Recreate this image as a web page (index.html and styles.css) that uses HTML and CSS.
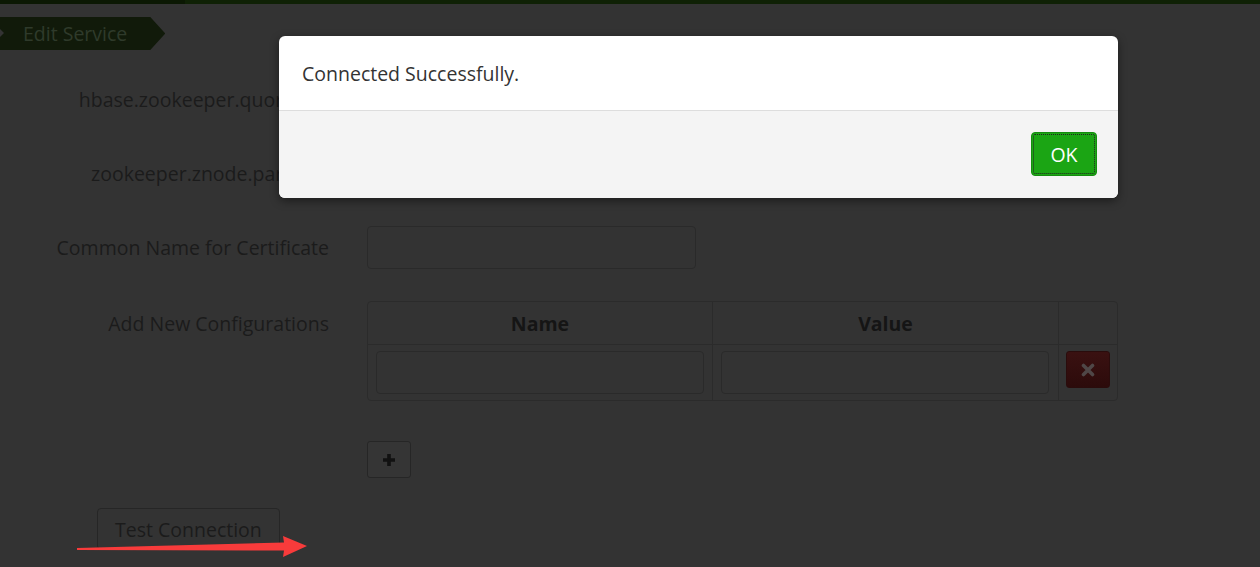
FILE: index.html
```html
<!DOCTYPE html>
<html lang="en">
<head>
<meta charset="utf-8">
<title>Edit Service</title>
<link rel="stylesheet" href="styles.css">
</head>
<body>
<div class="topbar"><div class="topbar-left"></div></div>
<nav class="crumbs">
  <span class="crumb-prev"></span>
  <span class="crumb">Edit Service</span>
</nav>
<form class="form">
  <label class="label">hbase.zookeeper.quorum <span class="req">*</span></label>
  <div class="control"><input class="input" type="text"></div>
  <label class="label">zookeeper.znode.parent <span class="req">*</span></label>
  <div class="control"><input class="input" type="text"></div>
  <label class="label">Common Name for Certificate</label>
  <div class="control"><input class="input" type="text"></div>
  <label class="label label-table">Add New Configurations</label>
  <div class="control">
    <table class="cfg">
      <colgroup><col class="c-name"><col class="c-value"><col class="c-del"></colgroup>
      <thead><tr><th>Name</th><th>Value</th><th class="th-del"></th></tr></thead>
      <tbody><tr>
        <td><input class="input cell-input" type="text"></td>
        <td><input class="input cell-input" type="text"></td>
        <td><button type="button" class="btn-del" aria-label="Remove"><svg width="14" height="14" viewBox="0 0 14 14"><path d="M2.5 2.5 L11.5 11.5 M11.5 2.5 L2.5 11.5" stroke="#4f4747" stroke-width="3.6" stroke-linecap="round"/></svg></button></td>
      </tr></tbody>
    </table>
    <button type="button" class="btn-add" aria-label="Add"><svg width="14" height="14" viewBox="0 0 14 14"><path d="M7 1 V13 M1 7 H13" stroke="#111" stroke-width="3.6"/></svg></button>
  </div>
  <div class="actions"><button type="button" class="btn-test">Test Connection</button></div>
</form>

<div class="modal">
  <div class="modal-body">Connected Successfully.</div>
  <div class="modal-footer"><button type="button" class="btn-ok">OK</button></div>
</div>

<svg class="arrow" width="240" height="30" viewBox="0 0 240 30">
  <polygon points="0,13 207,7.5 206,1 230,11 206,22 207,15.5 0,15" fill="#f83b3b"/>
</svg>
</body>
</html>
```

FILE: styles.css
```css
html, body {
  margin: 0;
  padding: 0;
  background: #333333;
  overflow: hidden;
}
body {
  font-family: "Open Sans", "Liberation Sans", sans-serif;
  font-size: 19.5px;
  color: #1b1b1b;
  position: relative;
  min-height: 567px;
}
.topbar {
  height: 4px;
  background: #0f2105;
  display: flex;
}
.topbar-left {
  width: 185px;
  background: #0b1803;
}
.crumbs {
  margin-top: 13px;
  height: 33px;
  display: flex;
  align-items: stretch;
  position: relative;
}
.crumb-prev {
  width: 4px;
  background: #111a0a;
  position: relative;
}
.crumb-prev::before {
  content: "";
  position: absolute;
  left: 0;
  top: 12px;
  border-left: 4px solid #333;
  border-top: 4px solid transparent;
  border-bottom: 4px solid transparent;
}
.crumb {
  background: #111a0a;
  color: #2f3a2b;
  font-size: 19.5px;
  line-height: 33px;
  padding: 0 38px 0 19px;
  clip-path: polygon(0 0, calc(100% - 15px) 0, 100% 50%, calc(100% - 15px) 100%, 0 100%);
}
.form {
  margin-top: 28px;
  display: grid;
  grid-template-columns: 329px 751px;
  column-gap: 38px;
  row-gap: 31px;
  align-items: start;
}
.label {
  text-align: right;
  line-height: 43px;
  white-space: nowrap;
}
.label-table {
  padding-top: 2px;
}
.req {
  color: #2a1010;
}
.input {
  box-sizing: border-box;
  width: 329px;
  height: 43px;
  border: 1px solid #2a2a2a;
  border-radius: 4px;
  background: #333;
  display: block;
}
.cfg {
  margin-top: 1px;
  width: 751px;
  table-layout: fixed;
  border-collapse: separate;
  border-spacing: 0;
  border: 1px solid #2b2b2b;
  border-radius: 4px;
}
.c-name { width: 345px; }
.c-value { width: 346px; }
.c-del { width: 58px; }
.cfg th {
  height: 42px;
  padding: 0;
  font-weight: 700;
  color: #151515;
  text-align: center;
  border-bottom: 1px solid #2b2b2b;
  border-right: 1px solid #2b2b2b;
}
.cfg th.th-del { border-right: none; }
.cfg td {
  padding: 6px 7px 6px 8px;
  border-right: 1px solid #2b2b2b;
  vertical-align: top;
}
.cfg td:last-child {
  border-right: none;
  padding: 6px 7px;
}
.cell-input { width: 328px; }
.btn-del {
  width: 44px;
  height: 37px;
  border: 1px solid #2a0c0c;
  border-radius: 3px;
  background: linear-gradient(#3a1111, #2c0b0b);
  padding: 0;
  display: flex;
  align-items: center;
  justify-content: center;
}
.btn-add {
  margin-top: 40px;
  width: 44px;
  height: 37px;
  border: 1px solid #262626;
  border-radius: 3px;
  background: #353535;
  padding: 0;
  display: flex;
  align-items: center;
  justify-content: center;
}
.actions {
  grid-column: 1 / 3;
  padding-left: 97px;
  margin-top: -1px;
}
.btn-test {
  height: 42px;
  padding: 0 17px;
  border: 1px solid #262626;
  border-radius: 4px;
  background: #333;
  color: #1b1b1b;
  font-family: "Open Sans", "Liberation Sans", sans-serif;
  font-size: 19.5px;
}
.modal {
  position: absolute;
  top: 36px;
  left: 279px;
  width: 839px;
  border-radius: 6px;
  overflow: hidden;
  background: #fff;
  box-shadow: 0 3px 10px rgba(0, 0, 0, 0.45);
}
.modal-body {
  height: 75px;
  padding: 0 23px;
  line-height: 75px;
  color: #333;
  font-size: 19.5px;
  border-bottom: 1px solid #dddddd;
  box-sizing: border-box;
}
.modal-footer {
  background: #f4f4f4;
  height: 87px;
  box-sizing: border-box;
  padding: 21px 21px 0 0;
  display: flex;
  justify-content: flex-end;
  align-items: flex-start;
}
.btn-ok {
  width: 66px;
  height: 44px;
  background: #1ba514;
  border: 1px solid #158c0f;
  border-radius: 4px;
  color: #fff;
  font-family: "Open Sans", "Liberation Sans", sans-serif;
  font-size: 19.5px;
  outline: 1px dotted #222;
  outline-offset: -3px;
  padding: 0;
}
.arrow {
  position: absolute;
  left: 77px;
  top: 535px;
}
```
